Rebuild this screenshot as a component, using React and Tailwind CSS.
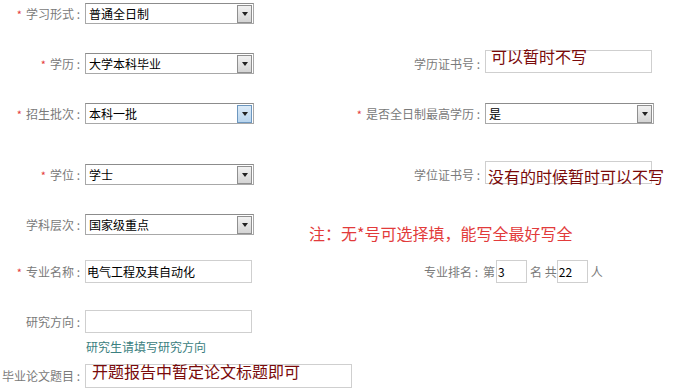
const font = { fontFamily: '"Noto Sans CJK SC", "Liberation Sans", sans-serif' };

function Label({ text, required, width = 'w-[85px]' }) {
  return (
    <div className={`${width} shrink-0 text-right text-[12px] text-[#7a7a7a] whitespace-nowrap pr-[5px]`}>
      {required && <span className="text-[#e4393c] mr-[4px] text-[11px]">*</span>}
      {text} :
    </div>
  );
}

function Select({ value, hover, width = 'w-[169px]' }) {
  return (
    <div className={`${width} h-[21px] shrink-0 border border-[#a8a8a8] border-t-[#8c8c8c] bg-white flex items-center justify-between pl-[3px] pr-[1px]`}>
      <span className="text-[12px] text-black leading-none">{value}</span>
      <span
        className={`w-[15px] h-[18px] border flex items-center justify-center ${
          hover ? 'border-[#6d97bf] bg-gradient-to-b from-[#dcebf8] to-[#b9d5ee]' : 'border-[#8f8f8f] bg-gradient-to-b from-[#f2f2f2] to-[#d4d4d4]'
        }`}
      >
        <span className="w-0 h-0 border-l-[3px] border-r-[3px] border-t-[4px] border-l-transparent border-r-transparent border-t-[#222]" />
      </span>
    </div>
  );
}

function TextBox({ value, note, width = 'w-[167px]', className = '' }) {
  return (
    <div className={`${width} h-[23px] shrink-0 relative border border-[#cfcfcf] bg-white ${className}`}>
      {value && <span className="absolute left-[1px] top-[2px] text-[12px] text-black">{value}</span>}
      {note}
    </div>
  );
}

function Overlay({ text, className }) {
  return <span className={`absolute whitespace-nowrap text-[16px] leading-none text-[#7a0a0a] ${className}`}>{text}</span>;
}

export default function App() {
  return (
    <div className="w-[697px] h-[391px] bg-white overflow-hidden" style={font}>
      {/* 学习形式 */}
      <div className="flex items-center h-[21px] mt-[3px]">
        <Label text="学习形式" required />
        <Select value="普通全日制" />
      </div>

      {/* 学历 */}
      <div className="flex items-center h-[21px] mt-[29px]">
        <Label text="学历" required />
        <Select value="大学本科毕业" />
        <Label text="学历证书号" width="w-[231px]" />
        <TextBox width="w-[167px]" className="-mt-[4px]" note={<Overlay text="可以暂时不写" className="left-[5px] -top-[3px]" />} />
      </div>

      {/* 招生批次 */}
      <div className="flex items-center h-[21px] mt-[29px]">
        <Label text="招生批次" required />
        <Select value="本科一批" hover />
        <Label text="是否全日制最高学历" required width="w-[231px]" />
        <Select value="是" />
      </div>

      {/* 学位 */}
      <div className="flex items-center h-[21px] mt-[40px]">
        <Label text="学位" required />
        <Select value="学士" />
        <Label text="学位证书号" width="w-[231px]" />
        <TextBox width="w-[167px]" className="-mt-[5px]" note={<Overlay text="没有的时候暂时可以不写" className="left-[2px] top-[6px]" />} />
      </div>

      {/* 学科层次 */}
      <div className="flex items-center h-[21px] mt-[29px]">
        <Label text="学科层次" />
        <Select value="国家级重点" />
        <span className="ml-[55px] mt-[16px] text-[16px] leading-none text-[#e23b3b] whitespace-nowrap">注：无*号可选择填，能写全最好写全</span>
      </div>

      {/* 专业名称 */}
      <div className="flex items-center h-[23px] mt-[25px]">
        <Label text="专业名称" required />
        <TextBox value="电气工程及其自动化" />
        <Label text="专业排名" width="w-[231px]" />
        <span className="text-[12px] text-[#7a7a7a] pr-[1px]">第</span>
        <TextBox value="3" width="w-[31px]" />
        <span className="text-[12px] text-[#7a7a7a] ml-[3px]">名 共</span>
        <TextBox value="22" width="w-[31px]" />
        <span className="text-[12px] text-[#7a7a7a] ml-[3px]">人</span>
      </div>

      {/* 研究方向 */}
      <div className="flex items-center h-[23px] mt-[27px]">
        <Label text="研究方向" />
        <TextBox />
      </div>
      <div className="pl-[86px] mt-[4px] h-[19px] text-[12px] text-[#3b8080] leading-[19px]">研究生请填写研究方向</div>

      {/* 毕业论文题目 */}
      <div className="flex items-center h-[24px] mt-[8px]">
        <Label text="毕业论文题目" />
        <TextBox width="w-[267px]" className="h-[24px]" note={<Overlay text="开题报告中暂定论文标题即可" className="left-[6px] -top-[2px]" />} />
      </div>
    </div>
  );
}
